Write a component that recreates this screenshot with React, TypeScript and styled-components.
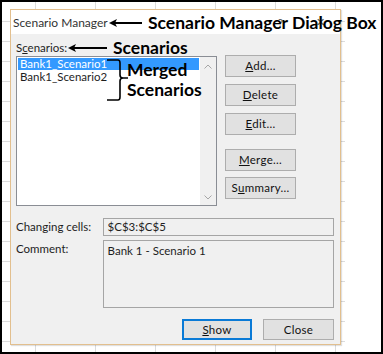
import React from 'react';
import styled, { createGlobalStyle } from 'styled-components';

const GlobalStyle = createGlobalStyle`
  html, body {
    margin: 0;
    padding: 0;
    background: #fff;
  }
  body {
    font-family: Lato, "Segoe UI", sans-serif;
  }
`;

const Frame = styled.div`
  position: relative;
  width: 383px;
  height: 354px;
  box-sizing: border-box;
  border: 2px solid #000;
  background: #fff;
  overflow: hidden;
`;

const Sheet = styled.div`
  width: 343px;
  height: 350px;
  box-sizing: border-box;
  padding: 7px 2px 7px 8px;
  background-color: #fff;
  background-image:
    repeating-linear-gradient(to bottom, transparent 0 19px, #dcdcdc 19px 20px),
    repeating-linear-gradient(to right, transparent 0 33px, #dcdcdc 33px 34px, transparent 34px 60px);
`;

const Dialog = styled.div`
  width: 331px;
  height: 336px;
  box-sizing: border-box;
  border: 1px solid #e2bf8e;
  background: #f0f0f0;
  box-shadow: 1px 1px 1px rgba(0, 0, 0, 0.12);
  display: flex;
  flex-direction: column;
  color: #1e1e1e;
  font-size: 11.5px;
`;

const TitleBar = styled.div`
  height: 24px;
  flex: none;
  background: #fff;
  display: flex;
  align-items: center;
  padding: 0 15px 0 2px;
  font-size: 12px;
  color: #333;
`;

const TitleText = styled.span`
  flex: 1;
`;

const TitleGlyph = styled.span`
  color: #555;
  font-size: 11px;
  margin-left: 33px;
`;

const Body = styled.div`
  flex: 1;
  display: flex;
  flex-direction: column;
  padding: 5px 6px 0 5px;
`;

const MainRow = styled.div`
  display: flex;
  gap: 8px;
`;

const ListColumn = styled.div`
  display: flex;
  flex-direction: column;
`;

const Label = styled.div`
  height: 17px;
  line-height: 17px;
`;

const ListBox = styled.div`
  width: 201px;
  height: 150px;
  box-sizing: border-box;
  border: 1px solid #8a8d94;
  background: #fff;
  display: flex;
`;

const Items = styled.div`
  flex: 1;
  padding: 1px;
`;

const Item = styled.div<{ selected?: boolean }>`
  height: 12px;
  line-height: 12px;
  margin-bottom: 1px;
  padding-left: 2px;
  background: ${p => (p.selected ? '#3399ff' : 'transparent')};
  color: ${p => (p.selected ? '#fff' : '#1e1e1e')};
`;

const ScrollTrack = styled.div`
  width: 16px;
  background: #f0f0f0;
  display: flex;
  flex-direction: column;
  justify-content: space-between;
  align-items: center;
  padding: 7px 0 5px;
`;

const ButtonColumn = styled.div`
  display: flex;
  flex-direction: column;
  padding-top: 16px;
`;

const Button = styled.button<{ gapTop?: number; primary?: boolean }>`
  width: 71px;
  height: 22px;
  margin-top: ${p => p.gapTop ?? 0}px;
  box-sizing: border-box;
  border: ${p => (p.primary ? '2px solid #0a7ad6' : '1px solid #adadad')};
  background: #e1e1e1;
  font-family: inherit;
  font-size: 11.5px;
  letter-spacing: 0.3px;
  color: #111;
  padding: 0;
  line-height: 1;
  cursor: pointer;
`;

const FieldRow = styled.div<{ gapTop: number }>`
  display: flex;
  margin-top: ${p => p.gapTop}px;
`;

const FieldLabel = styled.div`
  width: 88px;
  line-height: 17px;
`;

const Field = styled.div<{ tall?: boolean }>`
  width: 235px;
  height: ${p => (p.tall ? 68 : 18)}px;
  box-sizing: border-box;
  border: 1px solid #a5a5a5;
  background: #f0f0f0;
  padding: ${p => (p.tall ? '3px 4px' : '0 4px')};
  line-height: ${p => (p.tall ? 14 : 16)}px;
`;

const Footer = styled.div`
  display: flex;
  justify-content: flex-end;
  gap: 11px;
  margin-top: 11px;
`;

const Note = styled.div<{ size: number }>`
  position: absolute;
  font-family: Lato, "Open Sans", sans-serif;
  font-weight: 700;
  font-size: ${p => p.size}px;
  color: #000;
  line-height: 1;
  white-space: nowrap;
`;

const Mark = styled.svg`
  position: absolute;
  overflow: visible;
`;

const Chevron = ({ up }: { up?: boolean }) => (
  <svg width="8" height="5" viewBox="0 0 8 5">
    <path d={up ? 'M0.5 4.5 L4 1 L7.5 4.5' : 'M0.5 0.5 L4 4 L7.5 0.5'} fill="none" stroke="#a6a6a6" strokeWidth="1" />
  </svg>
);

const Arrow = ({ x, y, len }: { x: number; y: number; len: number }) => (
  <Mark style={{ left: x, top: y - 5 }} width={len} height={10}>
    <path d={`M3 5 H${len}`} stroke="#000" strokeWidth="2" />
    <path d="M0 5 L8 1 L6 5 L8 9 Z" fill="#000" />
  </Mark>
);

const App: React.FC = () => {
  return (
    <>
      <GlobalStyle />
      <Frame>
        <Sheet>
          <Dialog>
            <TitleBar>
              <TitleText>Scenario Manager</TitleText>
              <TitleGlyph>?</TitleGlyph>
              <TitleGlyph>✕</TitleGlyph>
            </TitleBar>
            <Body>
              <MainRow>
                <ListColumn>
                  <Label>
                    S<u>c</u>enarios:
                  </Label>
                  <ListBox>
                    <Items>
                      <Item selected>Bank1_Scenario1</Item>
                      <Item>Bank1_Scenario2</Item>
                    </Items>
                    <ScrollTrack>
                      <Chevron up />
                      <Chevron />
                    </ScrollTrack>
                  </ListBox>
                </ListColumn>
                <ButtonColumn>
                  <Button>
                    <u>A</u>dd...
                  </Button>
                  <Button gapTop={7}>
                    <u>D</u>elete
                  </Button>
                  <Button gapTop={7}>
                    <u>E</u>dit...
                  </Button>
                  <Button gapTop={14}>
                    <u>M</u>erge...
                  </Button>
                  <Button gapTop={6}>
                    S<u>u</u>mmary...
                  </Button>
                </ButtonColumn>
              </MainRow>
              <FieldRow gapTop={12}>
                <FieldLabel>Changing cells:</FieldLabel>
                <Field>$C$3:$C$5</Field>
              </FieldRow>
              <FieldRow gapTop={4}>
                <FieldLabel>Comment:</FieldLabel>
                <Field tall>Bank 1 - Scenario 1</Field>
              </FieldRow>
              <Footer>
                <Button primary style={{ width: 70, height: 21 }}>
                  <u>S</u>how
                </Button>
                <Button style={{ height: 21 }}>Close</Button>
              </Footer>
            </Body>
          </Dialog>
        </Sheet>

        <Arrow x={107} y={21} len={33} />
        <Note size={17.5} style={{ left: 146, top: 12 }}>
          Scenario Manager Dialog Box
        </Note>
        <Arrow x={66} y={46} len={39} />
        <Note size={17.5} style={{ left: 111, top: 37 }}>
          Scenarios
        </Note>
        <Mark style={{ left: 104, top: 56 }} width={24} height={44}>
          <path
            d="M1 2 H12 Q14 2 14 5 V17 Q14 20 17 20 H22 M17 20 Q14 20 14 23 V39 Q14 42 12 42 H1"
            fill="none"
            stroke="#000"
            strokeWidth="1.6"
          />
        </Mark>
        <Note size={17.5} style={{ left: 125, top: 59 }}>
          Merged
        </Note>
        <Note size={17.5} style={{ left: 125, top: 79 }}>
          Scenarios
        </Note>
      </Frame>
    </>
  );
};

export default App;
